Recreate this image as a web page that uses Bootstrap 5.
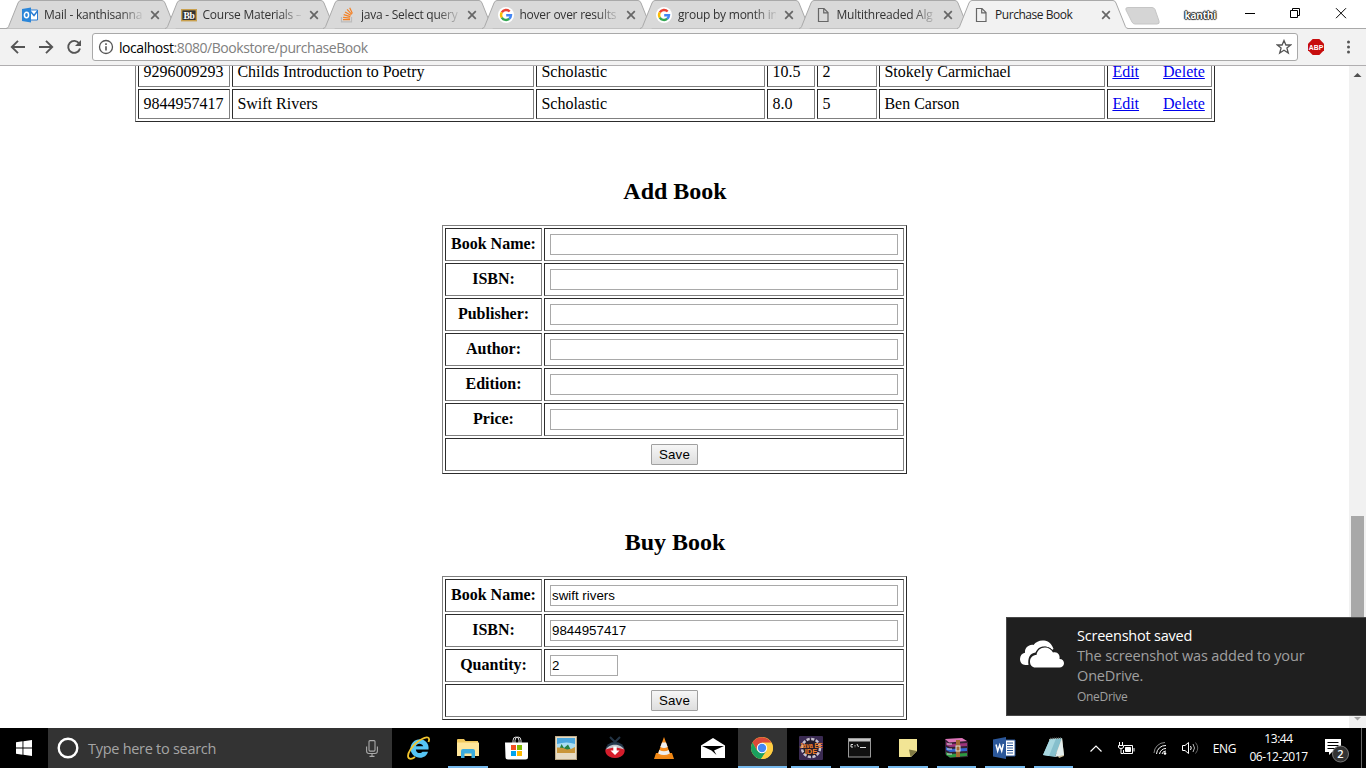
<!DOCTYPE html>
<html lang="en">
<head>
<meta charset="utf-8">
<meta name="viewport" content="width=device-width, initial-scale=1">
<title>Purchase Book</title>
<link rel="stylesheet" href="https://cdn.jsdelivr.net/npm/bootstrap@5.3.0/dist/css/bootstrap.min.css">
<script src="https://cdn.jsdelivr.net/npm/bootstrap@5.3.0/dist/js/bootstrap.bundle.min.js"></script>
<style>
body{font-family:"Open Sans","Noto Sans",sans-serif;color:#000;background:#fff;line-height:normal}
svg{display:block;flex:none}
/* browser window */
.tabstrip{height:29px;padding-left:6px;border-bottom:1px solid #a9a9a9}
.tab-item{width:171px;height:29px;margin-right:-12.5px;padding-left:16px;font-size:12px;letter-spacing:-.24px;color:#333;flex:none;z-index:0}
.tab-item>.shape{position:absolute;left:0;top:0;z-index:-1}
.tab-item.current{z-index:2;color:#222;letter-spacing:-.45px}
.tab-ico{width:16px;height:16px}
.tab-label{width:98px;margin-left:6px;line-height:16px;-webkit-mask-image:linear-gradient(90deg,#000 76px,transparent 101px);mask-image:linear-gradient(90deg,#000 76px,transparent 101px)}
.current .tab-label{-webkit-mask-image:none;mask-image:none}
.tab-x{margin-left:8px}
.newtab{margin-left:9px}
.user-name{font-size:10px;width:31px;margin-left:25px;letter-spacing:-.2px;color:#fff;line-height:14px;text-shadow:0 0 1px #000,1px 0 1px #333,-1px 0 1px #333,0 1px 1px #333,0 -1px 1px #333}
.toolbar{height:37px;background:#f2f2f2;border-bottom:1px solid #b0aeb0;padding-left:10px}
.omnibox{width:1206px;height:28px;background:#fff;border:1px solid #a9a9a9;border-radius:3px;margin-left:10px;padding:0 5px;font-size:14px;letter-spacing:-.45px}
.omnibox .path{color:#808080}
.address{margin-left:5px}
/* document */
.page{font-family:"Liberation Serif",serif;font-size:16px;line-height:18px;width:1349px}
.grid-table{border:1px solid;border-color:#808080 #2c2c2c #2c2c2c #808080;border-collapse:separate;border-spacing:2px;table-layout:fixed}
.grid-table td,.grid-table th{border:1px solid;border-color:#2c2c2c #808080 #808080 #2c2c2c;padding:5px;white-space:nowrap}
.grid-table th{text-align:center}
.book-list{width:1080px;margin:-12px 0 0 135px}
.grid-table.book-list td{padding-left:4.4px}
.book-list a{color:#00e}
.book-list a+a{margin-left:24px}
.page h2{font-size:24px;font-weight:700;line-height:27px;margin:0 0 20px;padding-left:1px;text-align:center;color:#000}
.entry{width:465px}
.entry th{width:97px}
.grid-table.entry th{padding:4px 5px 6px}
.field{display:block;width:348px;height:21px;border:1px solid #a9a9a9;border-radius:0;padding:1px;font:13.33px "Liberation Sans",sans-serif;color:#000}
.field.qty{width:68px}
.save{display:block;width:47px;height:21px;margin:0 auto;padding:0;border:1px solid #a0a0a0;border-radius:1px;background:linear-gradient(#f6f6f6,#dedede);font:13.33px/18px "Liberation Sans",sans-serif;letter-spacing:.2px;color:#000}
.scroller{width:17px;background:#f1f1f1}
.thumb{width:13px;height:180px;background:#a8a8a8;margin-top:435px}
/* notification */
.notice{right:0;top:617px;width:360px;height:99px;background:#1f1f1f;border:1px solid #484848;border-right:0;padding:8px 0 0 13px;color:#a0a0a0;font-size:14.5px;line-height:20px;z-index:5}
.notice-text{margin-left:13px;white-space:nowrap;letter-spacing:-.15px}
.notice-text small{font-size:12px;line-height:21px;display:block;letter-spacing:-.3px}
/* taskbar */
.taskbar{height:40px;background:#000;color:#fff}
.start{width:48px;flex:none}
.search{width:344px;flex:none;background:#333;color:#a5a5a5;font-size:14.5px;letter-spacing:-.28px;padding:0 14px 0 8px;margin-right:2.5px}
.app{width:49px;flex:none}
.focused~.app{width:48.5px}
.app.open::after{content:"";position:absolute;left:4.5px;right:4.5px;bottom:0;height:2px;background:#76b9ed}
.app.focused{background:#333}
.app.focused::after{left:0;right:0}
.clock{width:60px;font-size:12px;line-height:18px;letter-spacing:-.45px;text-align:center;white-space:nowrap}
.peek{width:1px;height:40px;background:#666;margin-left:1px}
</style>
</head>
<body class="vh-100 overflow-hidden d-flex flex-column position-relative">

<svg width="0" height="0" class="position-absolute">
  <defs>
    <symbol id="tab" viewBox="0 0 171 29"><path d="M0 28.5C3 28 2.500 26 4 23L12 3Q13 .5 15 .5H156Q158 .5 159 3L167 23C168.500 26 168 28 171 28.500" fill="#d9d9d9" stroke="#a9a9a9"/></symbol>
    <symbol id="x" viewBox="0 0 10 10"><path d="M1.200 1.200L8.800 8.800M8.800 1.200L1.200 8.800" stroke="#666" stroke-width="1.700"/></symbol>
    <symbol id="doc" viewBox="0 0 16 16"><path d="M3.500 1.500H9L13 5.500V14.500H3.500ZM8.700 1.500V5.800H13" fill="none" stroke="#666" stroke-width="1.200"/></symbol>
    <symbol id="g" viewBox="0 0 16 16"><circle cx="8" cy="8" r="8" fill="#fff"/><g fill="none" stroke-width="2.400"><path d="M3.800 5.400A5 5 0 0 1 11.700 4.500" stroke="#ea4335"/><path d="M3.800 5.400A5 5 0 0 0 3.800 10.600" stroke="#fbbc05"/><path d="M3.800 10.600A5 5 0 0 0 11.200 11.800" stroke="#34a853"/><path d="M11.200 11.800A5 5 0 0 0 13 8.200H8.200" stroke="#4285f4"/></g></symbol>
  </defs>
</svg>

<header>
  <div class="tabstrip d-flex align-items-start">
    <div class="tab-item position-relative d-flex align-items-center">
      <svg class="shape" width="171" height="29"><use href="#tab"/></svg>
      <svg class="tab-ico" viewBox="0 0 16 16"><path d="M7 3H15.500V13H7Z" fill="#fff" stroke="#2b7cd3"/><path d="M8.500 4.500L12 8.500L15.500 4" fill="none" stroke="#2b7cd3" stroke-width="1.500"/><path d="M0 2L9 .5V15.500L0 14Z" fill="#2b86d9"/><ellipse cx="4.500" cy="8" rx="2.100" ry="2.700" fill="none" stroke="#fff" stroke-width="1.500"/></svg>
      <div class="tab-label text-nowrap">Mail - kanthisanna</div>
      <svg class="tab-x" width="10" height="10"><use href="#x"/></svg>
    </div>
    <div class="tab-item position-relative d-flex align-items-center">
      <svg class="shape" width="171" height="29"><use href="#tab"/></svg>
      <svg class="tab-ico" viewBox="0 0 16 16"><rect x=".7" y="2.700" width="14.600" height="11" fill="#333" stroke="#c9a04e" stroke-width="1.400"/><text x="8" y="11.500" font-family="Liberation Serif" font-weight="700" font-size="9.500" fill="#fff" text-anchor="middle">Bb</text></svg>
      <div class="tab-label text-nowrap">Course Materials –</div>
      <svg class="tab-x" width="10" height="10"><use href="#x"/></svg>
    </div>
    <div class="tab-item position-relative d-flex align-items-center">
      <svg class="shape" width="171" height="29"><use href="#tab"/></svg>
      <svg class="tab-ico" viewBox="0 0 16 16"><path d="M2.500 10V14.800H12.500V10" fill="none" stroke="#bcbbbb" stroke-width="1.200"/><path d="M4 12.700H11M4.100 10.300L11 11.100M4.700 7.700L11.300 9.600M6 4.900L11.900 8.300M8.100 2.400L12.700 7.300M10.700 .8L13.400 6.500" stroke="#f48024" stroke-width="1.200"/></svg>
      <div class="tab-label text-nowrap">java - Select query</div>
      <svg class="tab-x" width="10" height="10"><use href="#x"/></svg>
    </div>
    <div class="tab-item position-relative d-flex align-items-center">
      <svg class="shape" width="171" height="29"><use href="#tab"/></svg>
      <svg class="tab-ico"><use href="#g"/></svg>
      <div class="tab-label text-nowrap">hover over results</div>
      <svg class="tab-x" width="10" height="10"><use href="#x"/></svg>
    </div>
    <div class="tab-item position-relative d-flex align-items-center">
      <svg class="shape" width="171" height="29"><use href="#tab"/></svg>
      <svg class="tab-ico"><use href="#g"/></svg>
      <div class="tab-label text-nowrap">group by month in</div>
      <svg class="tab-x" width="10" height="10"><use href="#x"/></svg>
    </div>
    <div class="tab-item position-relative d-flex align-items-center">
      <svg class="shape" width="171" height="29"><use href="#tab"/></svg>
      <svg class="tab-ico"><use href="#doc"/></svg>
      <div class="tab-label text-nowrap">Multithreaded Alg</div>
      <svg class="tab-x" width="10" height="10"><use href="#x"/></svg>
    </div>
    <div class="tab-item current position-relative d-flex align-items-center">
      <svg class="shape" width="171" height="30" viewBox="0 0 171 30"><path d="M0 30V28.500C3 28 2.500 26 4 23L12 3Q13 .5 15 .5H156Q158 .5 159 3L167 23C168.500 26 168 28 171 28.500V30Z" fill="#f2f2f2"/><path d="M0 28.500C3 28 2.500 26 4 23L12 3Q13 .5 15 .5H156Q158 .5 159 3L167 23C168.500 26 168 28 171 28.500" fill="none" stroke="#a9a9a9"/></svg>
      <svg class="tab-ico"><use href="#doc"/></svg>
      <div class="tab-label text-nowrap">Purchase Book</div>
      <svg class="tab-x" width="10" height="10"><use href="#x"/></svg>
    </div>
    <svg class="newtab" width="35" height="28" viewBox="0 0 35 28"><path d="M3 7.500H27Q29 7.500 30 9.500L34 21Q35 24 32 24H10Q8 24 7 22L1 10Q0 7.500 3 7.500Z" fill="#d5d5d5" stroke="#c5c5c5"/></svg>
    <div class="user-name mt-2 fw-bold">kanthi</div>
    <svg width="134" height="28" viewBox="0 0 134 28" fill="none" stroke="#000"><path d="M29 13.500H39M74.500 10.500H81.500V17.500H74.500ZM76.500 10V8.500H83.500V15.500H82M120 8.200L130 18.200M130 8.200L120 18.200"/></svg>
  </div>
  <div class="toolbar d-flex align-items-center">
    <svg width="72" height="16" viewBox="0 0 72 16" fill="none" stroke="#555" stroke-width="1.900"><path d="M15 8H2M8 1.800L1.800 8L8 14.200M29 8H42M36 1.800L42.200 8L36 14.200M69.200 4.500A6 6 0 1 0 70 9.500"/><path d="M71 1V7H65Z" fill="#555" stroke="none"/></svg>
    <div class="omnibox d-flex align-items-center">
      <svg width="16" height="16" viewBox="0 0 16 16"><circle cx="8" cy="8" r="6.500" fill="none" stroke="#555" stroke-width="1.300"/><path d="M8 7.200V11.500M8 4.200V5.900" stroke="#555" stroke-width="1.600"/></svg>
      <span class="address">localhost<span class="path">:8080/Bookstore/purchaseBook</span></span>
      <svg class="ms-auto" width="16" height="16" viewBox="0 0 16 16"><path d="M8 1.500L9.900 6H14.700L10.900 9L12.300 14L8 11.200L3.700 14L5.100 9L1.300 6H6.100Z" fill="none" stroke="#555" stroke-width="1.300"/></svg>
    </div>
    <svg style="margin-left:10px" width="16" height="16" viewBox="0 0 16 16"><path d="M4.700 0H11.300L16 4.700V11.300L11.300 16H4.700L0 11.300V4.700Z" fill="#c70d0d"/><text x="8" y="10.600" font-family="Liberation Sans" font-weight="700" font-size="6.800" fill="#fff" text-anchor="middle">ABP</text></svg>
    <svg style="margin-left:22px" width="5" height="14" viewBox="0 0 5 14" fill="#555"><circle cx="2.500" cy="2" r="1.500"/><circle cx="2.500" cy="7" r="1.500"/><circle cx="2.500" cy="12" r="1.500"/></svg>
  </div>
</header>

<main class="flex-grow-1 d-flex overflow-hidden">
  <div class="page">
    <table class="grid-table book-list">
      <colgroup><col style="width:92px"><col style="width:302px"><col style="width:229px"><col style="width:48px"><col style="width:60px"><col style="width:226px"><col style="width:105px"></colgroup>
      <tr><td>9296009293</td><td>Childs Introduction to Poetry</td><td>Scholastic</td><td>10.5</td><td>2</td><td>Stokely Carmichael</td><td><a href="#">Edit</a><a href="#">Delete</a></td></tr>
      <tr><td>9844957417</td><td>Swift Rivers</td><td>Scholastic</td><td>8.0</td><td>5</td><td>Ben Carson</td><td><a href="#">Edit</a><a href="#">Delete</a></td></tr>
    </table>
    <h2 style="margin-top:56px">Add Book</h2>
    <table class="grid-table entry mx-auto">
      <tr><th>Book Name:</th><td><input class="field"></td></tr>
      <tr><th>ISBN:</th><td><input class="field"></td></tr>
      <tr><th>Publisher:</th><td><input class="field"></td></tr>
      <tr><th>Author:</th><td><input class="field"></td></tr>
      <tr><th>Edition:</th><td><input class="field"></td></tr>
      <tr><th>Price:</th><td><input class="field"></td></tr>
      <tr><td colspan="2"><button class="save">Save</button></td></tr>
    </table>
    <h2 style="margin-top:55px">Buy Book</h2>
    <table class="grid-table entry mx-auto">
      <tr><th>Book Name:</th><td><input class="field" value="swift rivers"></td></tr>
      <tr><th>ISBN:</th><td><input class="field" value="9844957417"></td></tr>
      <tr><th>Quantity:</th><td><input class="field qty" value="2"></td></tr>
      <tr><td colspan="2"><button class="save">Save</button></td></tr>
    </table>
  </div>
  <div class="scroller d-flex flex-column align-items-center">
    <svg width="9" height="15" viewBox="0 0 9 15"><path d="M.5 11L4.500 7L8.500 11Z" fill="#505050"/></svg>
    <div class="thumb"></div>
    <svg class="mt-auto" width="9" height="14" viewBox="0 0 9 14"><path d="M1 3L4.500 6.500L8 3Z" fill="#a3a3a3"/></svg>
  </div>
</main>

<aside class="notice position-absolute d-flex align-items-start">
  <svg style="margin-top:14px" width="44" height="29" viewBox="0 0 44 29"><path d="M8.500 25H5.500C2 25 0 22 0 19C0 15.500 2 13.200 5 12.700C4.500 8 9 4 13.500 5C16 1.500 20 0 24 .5C28.500 1 32 4 33.500 9L32 10C30 7 20 3 15.500 12.500C10 13 7.500 18 8.500 25Z" fill="#fff"/><path d="M15.500 27.500C12 27.500 10 25 10 21.500C10 17.500 13 15 16.500 15C17 10.500 20.500 7.500 25 7.500C28.500 7.500 31.500 9.500 33 12.500C37 11 40.500 14.500 39.500 19C42.500 19 44 21 44 23.300C44 26 42 27.500 39.500 27.500Z" fill="#fff" stroke="#1f1f1f" stroke-width="1.500" paint-order="stroke"/></svg>
  <div class="notice-text"><div class="text-white" style="letter-spacing:-.22px">Screenshot saved</div><div>The screenshot was added to your</div><div>OneDrive.</div><small>OneDrive</small></div>
</aside>

<footer class="taskbar d-flex align-items-stretch">
  <div class="start d-flex align-items-center justify-content-center"><svg width="16" height="16" viewBox="0 0 16 16" fill="#fff"><path d="M0 2.300L6.500 1.300V7.500H0ZM7.400 1.200L16 0V7.500H7.400ZM0 8.500H6.500V14.700L0 13.700ZM7.400 8.500H16V16L7.400 14.800Z"/></svg></div>
  <div class="search d-flex align-items-center">
    <svg width="24" height="24" viewBox="0 0 24 24"><circle cx="12" cy="12" r="9.300" fill="none" stroke="#fff" stroke-width="2.400"/></svg>
    <span class="ms-2">Type here to search</span>
    <svg class="ms-auto" width="12" height="17" viewBox="0 0 12 17" fill="none" stroke="#aaa" stroke-width="1.100"><rect x="3" y=".6" width="6" height="10.500" rx="1"/><path d="M.6 6.500V11Q.6 13.500 3 13.500H9Q11.400 13.500 11.400 11V6.500M6 13.500V16M3.500 16.400H8.500"/></svg>
  </div>
  <div class="app d-flex align-items-center justify-content-center"><svg width="24" height="24" viewBox="0 0 24 24"><path d="M6.500 13.500H21.500C22.500 7.500 18 3.200 13 3.200C7.500 3.200 3.500 7.500 3.500 12.500C3.500 18 8 21.800 13 21.800C17 21.800 20 19.500 21 15.800H15.500C14 18 9 17.500 8.800 13.500M8.900 10.300C9.500 6.800 15.500 6.800 16.200 10.300Z" fill="#56c5f5" fill-rule="evenodd"/><path d="M21.500 6C23.500 1 20 0 15 3C6 7.500-1.500 19 2 22.300C3.500 23.500 6 22.500 8 21" fill="none" stroke="#f3c52e" stroke-width="1.800"/></svg></div>
  <div class="app open position-relative d-flex align-items-center justify-content-center"><svg width="22" height="19" viewBox="0 0 22 19"><path d="M0 2V1Q0 0 1 0H7L8.500 2H21V17H0Z" fill="#f0c85e"/><path d="M1.500 3.500H22V17H0V3.500Z" fill="#ffe69b"/><path d="M4 19V12Q4 10 6 10H16Q18 10 18 12V19H14.500V14.500H7.500V19Z" fill="#3bacdf"/></svg></div>
  <div class="app d-flex align-items-center justify-content-center"><svg width="24" height="24" viewBox="0 0 24 24"><path d="M8 7V4.500Q8 1 11 1Q14 1 14 4.500V7M10 7V4.500Q10 1 13 1Q16 1 16 4.500V7" fill="none" stroke="#ddd"/><path d="M0 6.500H23V21Q23 23.500 20.500 23.500H3Q.5 23.500 .5 21Z" fill="#fff"/><path d="M6 9H11V14H6Z" fill="#f25022"/><path d="M12 9H17V14H12Z" fill="#7fba00"/><path d="M6 15H11V20H6Z" fill="#00a4ef"/><path d="M12 15H17V20H12Z" fill="#ffb900"/></svg></div>
  <div class="app d-flex align-items-center justify-content-center"><svg width="22" height="24" viewBox="0 0 22 24"><path d="M0 0H22V24H0Z" fill="#b9a583"/><path d="M.8 .8H21V23H.8Z" fill="#e7dbc3"/><path d="M2 2H20V17H2Z" fill="#4aa6dd"/><path d="M2 8Q12 5 20 8V13H2Z" fill="#a9ddf2"/><path d="M4 14L6.500 8L9 12L13 8.500L16 14Z" fill="#258141"/><path d="M2 11.500Q8 11 12 13.500Q17 13 20 11V17H2Z" fill="#c9963a"/></svg></div>
  <div class="app d-flex align-items-center justify-content-center"><svg width="22" height="24" viewBox="0 0 22 24"><path d="M6 1L11 6L16 1" stroke="#233445" stroke-width="2" fill="none"/><ellipse cx="11" cy="14" rx="9.500" ry="8" fill="#24384b"/><path d="M1.500 13.500C5 9 17 9 20.500 13.500C21.500 18 17 22 11 22C5 22 .5 18 1.500 13.500Z" fill="#d51d2b"/><path d="M2 13.500C5 7 17 7 20 13.500C15 11 7 11 2 13.500Z" fill="#c4c9ce"/><path d="M9.300 10.500H12.700V14.500H15.500L11 19L6.500 14.500H9.300Z" fill="#fff"/></svg></div>
  <div class="app d-flex align-items-center justify-content-center"><svg width="22" height="24" viewBox="0 0 22 24"><path d="M3 17H19L21 23H1Z" fill="#ef8715"/><path d="M11 1L17.500 19Q11 23 4.500 19Z" fill="#f58b1b"/><path d="M9 6.500H13L14.700 11Q11 13 7.300 11ZM6.300 14Q11 16.500 15.700 14L16.800 17.500Q11 20.500 5.200 17.500Z" fill="#eee"/></svg></div>
  <div class="app d-flex align-items-center justify-content-center"><svg width="24" height="20" viewBox="0 0 24 20"><path d="M0 7.500L12 0L24 7.500V20H0Z" fill="#fff"/><path d="M1 8H23L13 12.500L15.500 17L10.500 12.500Z" fill="#000"/></svg></div>
  <div class="app open focused position-relative d-flex align-items-center justify-content-center"><svg width="22" height="22" viewBox="0 0 22 22"><circle cx="11" cy="11" r="11" fill="#ffcd42"/><path d="M1.500 5.500A11 11 0 0 1 20.500 5.700H11L6.300 13.700Z" fill="#dc4939"/><path d="M1.500 5.500A11 11 0 0 0 10 22L15.700 13.700H6.300Z" fill="#1aa15f"/><path d="M10 22A11 11 0 0 0 20.500 5.700H11L15.700 13.700Z" fill="#ffcd42"/><circle cx="11" cy="11" r="5.200" fill="#fff"/><circle cx="11" cy="11" r="4.200" fill="#4587f3"/></svg></div>
  <div class="app open position-relative d-flex align-items-center justify-content-center"><svg width="24" height="24" viewBox="0 0 24 24"><rect width="24" height="24" rx="1" fill="#3a2a52"/><circle cx="12" cy="12" r="9" fill="#221b2b" stroke="#c9c3cf" stroke-width="2.500" stroke-dasharray="3.200 1.500"/><g font-family="Liberation Sans" font-weight="700" fill="#f58229" text-anchor="middle"><text x="12" y="11.500" font-size="7" textLength="23" lengthAdjust="spacingAndGlyphs">Java EE</text><text x="12" y="18.200" font-size="7.500">IDE</text></g></svg></div>
  <div class="app open position-relative d-flex align-items-center justify-content-center"><svg width="23" height="20" viewBox="0 0 23 20"><rect x=".5" y=".5" width="22" height="18.500" fill="#111" stroke="#999"/><path d="M1 1H22V3.500H1Z" fill="#c8c8c8"/><path d="M3 6.500H5M3 6.500V9H5M7 7V7.800M7 8.500V9.200M9 6L10.500 9M12 9.500H18" stroke="#ddd" fill="none"/></svg></div>
  <div class="app open position-relative d-flex align-items-center justify-content-center"><svg width="18" height="18" viewBox="0 0 18 18"><path d="M0 0H18V12L12 18H0Z" fill="#f2e595"/><path d="M10 10.500L18 12L11.500 18Z" fill="#7f7842"/></svg></div>
  <div class="app open position-relative d-flex align-items-center justify-content-center"><svg width="24" height="20" viewBox="0 0 24 20"><path d="M1 1L18 0L24 4V19L6 20L1 16Z" fill="#332033"/><path d="M1 1L18 0L23 3L5 4.500Z" fill="#dc75b8"/><path d="M2 4L6 6L23 5V8L6 9L2 7Z" fill="#9b337a"/><path d="M2 9L6 11L23 10V13L6 14L2 12Z" fill="#3266d4"/><path d="M2 14L6 16L23 15V18L6 19.500L2 17Z" fill="#2c9842"/><path d="M3 6H8M3 11H8M3 16H8" stroke="#ddd"/><path d="M12 2H16V19H12Z" fill="#a46b33"/><rect x="12" y="8" width="4" height="5" fill="none" stroke="#ddd"/></svg></div>
  <div class="app open position-relative d-flex align-items-center justify-content-center"><svg width="23" height="22" viewBox="0 0 23 22"><path d="M11 3H22V19H11Z" fill="#fff" stroke="#2b579a"/><path d="M14 6H20M14 8.500H20M14 11H20M14 13.500H20M14 16H20" stroke="#2b579a"/><path d="M0 2.500L13 0V22L0 19.500Z" fill="#2b579a"/><path d="M3 7.500L4.700 14L6.700 8L8.700 14L10.400 7" stroke="#fff" stroke-width="1.500" fill="none"/></svg></div>
  <div class="app open position-relative d-flex align-items-center justify-content-center"><svg width="23" height="22" viewBox="0 0 23 22"><path d="M7 2L20 1L22 19L17 21Z" fill="#cbbd9a"/><path d="M8 2L20 1L13 20L1 18Z" fill="#86bfcc"/><path d="M8 2L14 1.500L7 19L1 18Z" fill="#a8d7df"/><path d="M20 1L22 18L13 20Z" fill="#e3eeee"/><path d="M8 1.500L20 .8" stroke="#555" stroke-width="1.500" stroke-dasharray="1 1"/></svg></div>
  <div class="d-flex align-items-center">
    <div class="d-flex justify-content-center" style="width:36px"><svg width="12" height="7" viewBox="0 0 12 7"><path d="M.5 6.500L6 1L11.500 6.500" fill="none" stroke="#fff" stroke-width="1.200"/></svg></div>
    <div class="d-flex justify-content-center" style="width:26px"><svg width="17" height="13" viewBox="0 0 17 13" fill="none" stroke="#fff"><path d="M6 3.500H14.500V11.500H5.500V8M16 6V9.500M1.500 0V3M4.500 0V3M.5 3.500H5.500V5Q5.500 6.500 3 6.500Q.5 6.500 .5 5ZM3 6.500V11.500H5"/><path d="M7.500 5.500H12.500V9.500H7.500Z" fill="#fff"/></svg></div>
    <div class="d-flex justify-content-center" style="width:40px"><svg width="14" height="14" viewBox="0 0 14 14" fill="none"><path d="M1 12A11 11 0 0 1 12 1.500" stroke="#888"/><path d="M3.500 13A9 9 0 0 1 13 4.500M6.500 13A6.500 6.500 0 0 1 13 7.500M9 13A4 4 0 0 1 13 10" stroke="#fff"/><circle cx="12" cy="12.500" r="1.300" fill="#fff"/></svg></div>
    <div class="d-flex justify-content-center" style="width:21px"><svg width="17" height="14" viewBox="0 0 17 14" fill="none" stroke="#fff"><path d="M.5 4.500H3L6.500 1.500V12.500L3 9.500H.5ZM8.500 5Q10 7 8.500 9"/><path d="M11 3Q14 7 11 11" stroke="#bbb"/><path d="M13.500 1.500Q18 7 13.500 12.500" stroke="#666"/></svg></div>
    <div class="text-center" style="width:48px;font-size:12px;letter-spacing:-.3px">ENG</div>
    <div class="clock">13:44<br>06-12-2017</div>
    <div class="d-flex justify-content-center" style="width:51px"><svg width="28" height="26" viewBox="0 0 28 26" style="margin:4px 0 0 6px"><path d="M2 2H18V15H9L6 18V15H2Z" fill="#fff"/><path d="M4.500 5.500H15.500M4.500 8.500H15.500M4.500 11.500H12" stroke="#000"/><circle cx="17.500" cy="17" r="8" fill="#333" stroke="#777"/><text x="17.500" y="21" font-family="Open Sans" font-size="11" font-weight="600" fill="#fff" text-anchor="middle">2</text></svg></div>
    <div class="peek"></div>
  </div>
</footer>
</body>
</html>
